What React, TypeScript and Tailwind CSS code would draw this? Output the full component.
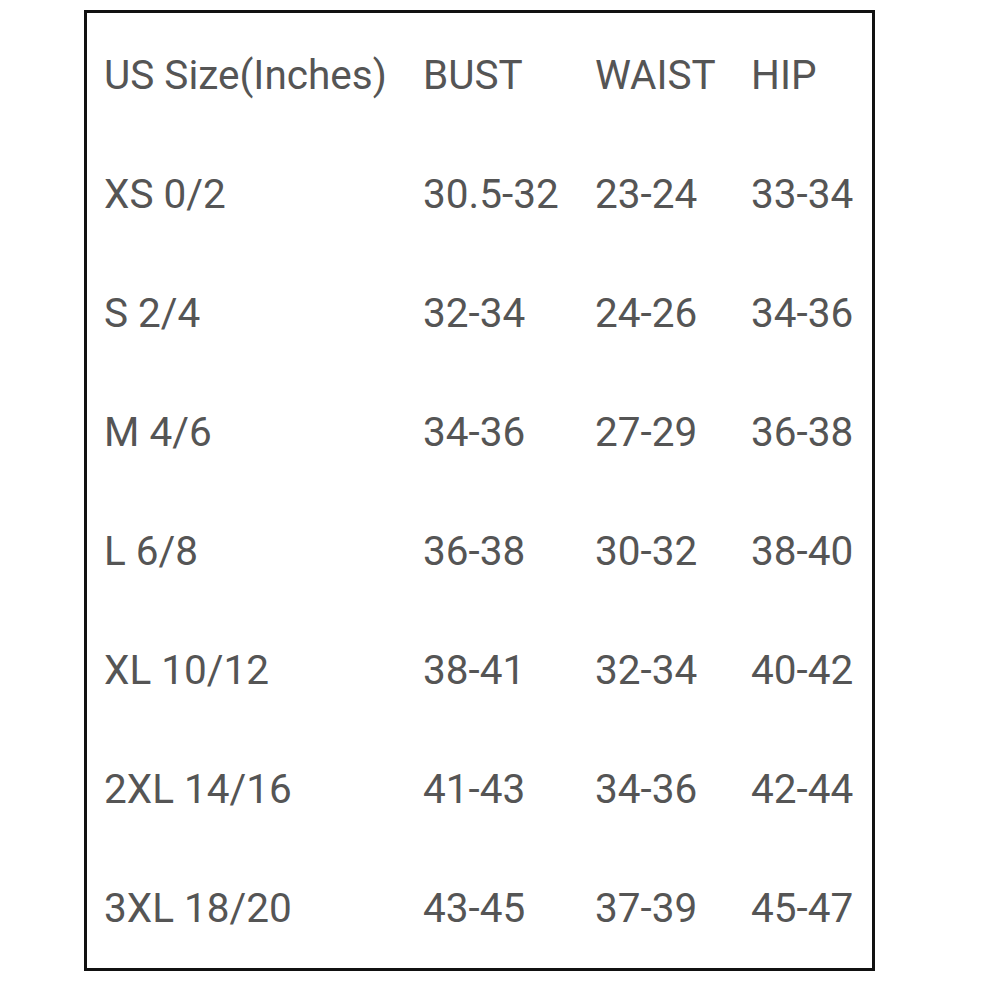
const rows = [
  ["US Size(Inches)", "BUST", "WAIST", "HIP"],
  ["XS 0/2", "30.5-32", "23-24", "33-34"],
  ["S 2/4", "32-34", "24-26", "34-36"],
  ["M 4/6", "34-36", "27-29", "36-38"],
  ["L 6/8", "36-38", "30-32", "38-40"],
  ["XL 10/12", "38-41", "32-34", "40-42"],
  ["2XL 14/16", "41-43", "34-36", "42-44"],
  ["3XL 18/20", "43-45", "37-39", "45-47"],
];

export default function App() {
  return (
    <div className="h-[1000px] w-[1000px] bg-white pl-[84px] pt-[10px] font-['Roboto',sans-serif]">
      <div className="h-[961px] w-[791px] border-[3px] border-[#111] pl-[17px] pt-[3px] text-[40.5px] text-[#555]">
        {rows.map((row) => (
          <div
            key={row[0]}
            className="grid h-[119px] grid-cols-[319px_172px_156px_1fr] items-center"
          >
            {row.map((cell, i) => (
              <span key={i} className="whitespace-nowrap leading-none">
                {cell}
              </span>
            ))}
          </div>
        ))}
      </div>
    </div>
  );
}
